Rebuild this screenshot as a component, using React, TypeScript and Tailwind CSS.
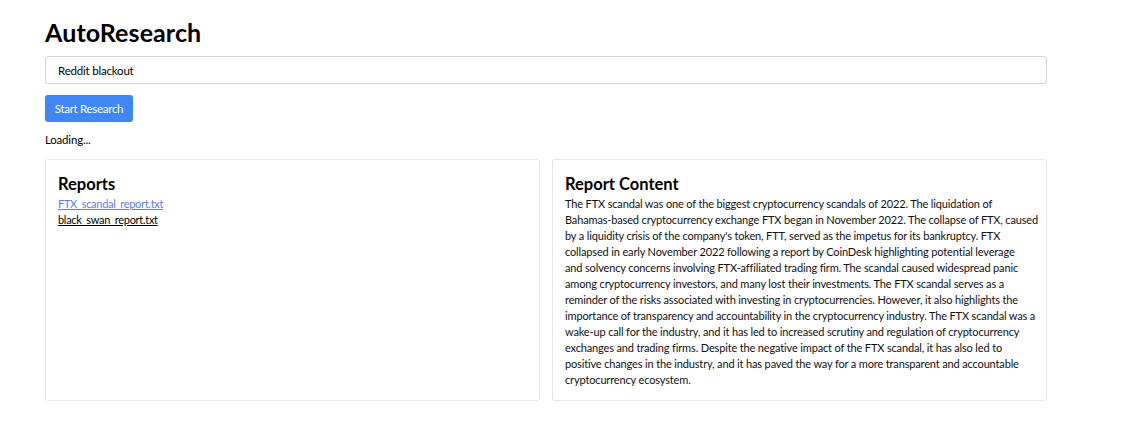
import { useState } from "react";

const reports = ["FTX_scandal_report.txt", "black_swan_report.txt"];

// lines as they wrap in the reference
const contentLines = [
  "The FTX scandal was one of the biggest cryptocurrency scandals of 2022. The liquidation of",
  "Bahamas-based cryptocurrency exchange FTX began in November 2022. The collapse of FTX, caused",
  "by a liquidity crisis of the company's token, FTT, served as the impetus for its bankruptcy. FTX",
  "collapsed in early November 2022 following a report by CoinDesk highlighting potential leverage",
  "and solvency concerns involving FTX-affiliated trading firm. The scandal caused widespread panic",
  "among cryptocurrency investors, and many lost their investments. The FTX scandal serves as a",
  "reminder of the risks associated with investing in cryptocurrencies. However, it also highlights the",
  "importance of transparency and accountability in the cryptocurrency industry. The FTX scandal was a",
  "wake-up call for the industry, and it has led to increased scrutiny and regulation of cryptocurrency",
  "exchanges and trading firms. Despite the negative impact of the FTX scandal, it has also led to",
  "positive changes in the industry, and it has paved the way for a more transparent and accountable",
  "cryptocurrency ecosystem.",
];

export default function App() {
  const [topic, setTopic] = useState("Reddit blackout");
  const [selected, setSelected] = useState(reports[0]);

  return (
    <div className="min-h-screen bg-white text-black font-['Lato','Liberation_Sans',sans-serif]">
      <div className="w-[1002px] ml-[45px] pt-4">
        <h1 className="text-[25px] leading-8 font-bold tracking-[0.1px]">AutoResearch</h1>

        <input
          value={topic}
          onChange={(e) => setTopic(e.target.value)}
          className="mt-2 w-full h-[28px] px-3 text-[11.5px] tracking-[-0.2px] border border-[#d4d4d8] rounded-[3px] outline-none"
        />

        <button className="mt-[11px] h-[27px] w-[88px] rounded-[3px] bg-[#3f86f7] text-white text-[11.5px] tracking-[-0.3px]">
          Start Research
        </button>

        <p className="mt-[10px] text-[11.5px] tracking-[-0.2px] leading-4">Loading...</p>

        {/* Reports + content */}
        <div className="mt-[11px] grid grid-cols-2 gap-3">
          <div className="border border-[#e5e7eb] rounded-[3px] p-3">
            <h2 className="text-[16.5px] leading-6 font-bold">Reports</h2>
            <ul>
              {reports.map((r) => (
                <li key={r} className="text-[11px] leading-4 tracking-[-0.3px]">
                  <button
                    onClick={() => setSelected(r)}
                    className={`underline ${selected === r ? "text-[#5b7cf7]" : "text-black"}`}
                  >
                    {r}
                  </button>
                </li>
              ))}
            </ul>
          </div>
          <div className="border border-[#e5e7eb] rounded-[3px] p-3">
            <h2 className="text-[16.5px] leading-6 font-bold">Report Content</h2>
            <p className="text-[11px] leading-4 tracking-[-0.15px] text-[#111]">
              {contentLines.map((line, i) => (
                <span key={i} className="block whitespace-nowrap">
                  {line}
                </span>
              ))}
            </p>
          </div>
        </div>
      </div>
    </div>
  );
}
